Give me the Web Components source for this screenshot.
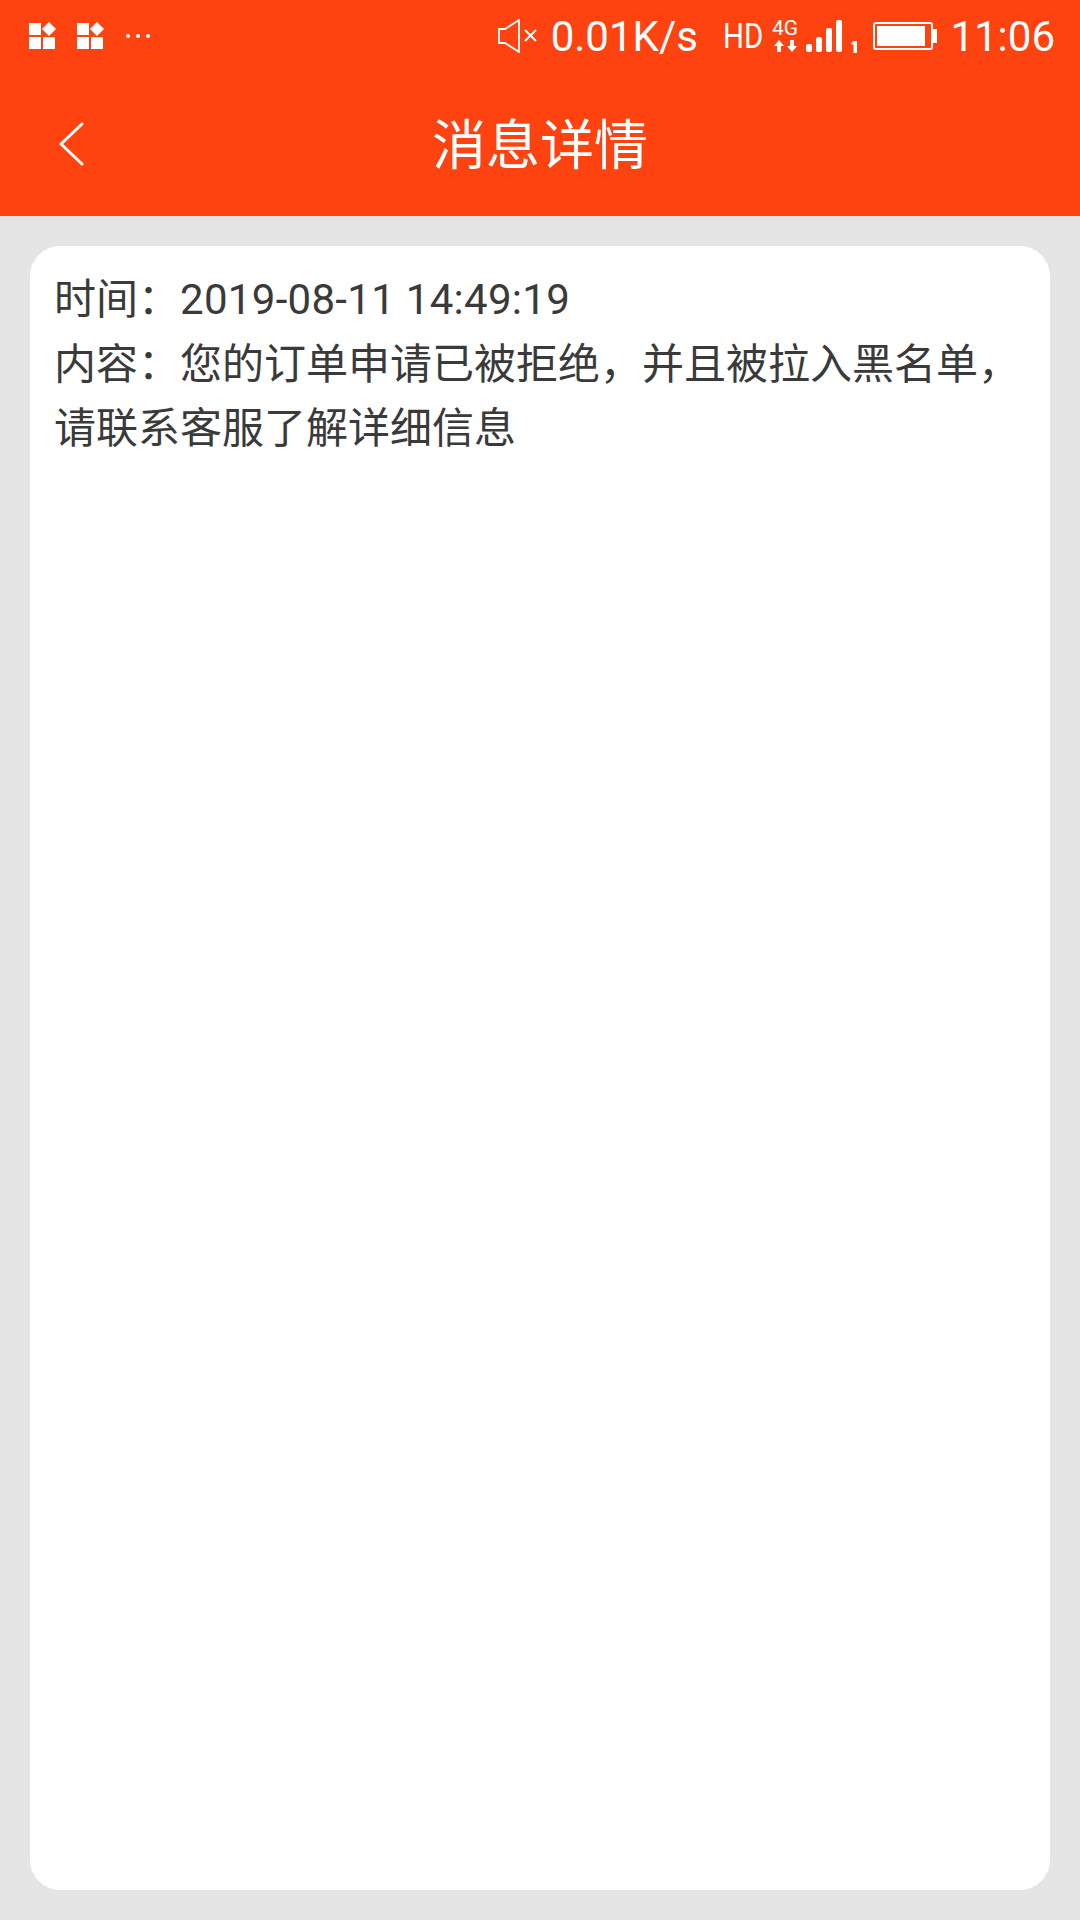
<!DOCTYPE html>
<html lang="zh-CN">
<head>
<meta charset="utf-8">
<title>消息详情</title>
<style>
  html, body { margin: 0; padding: 0; height: 100%; }
  body {
    display: flex;
    flex-direction: column;
    width: 1080px;
    height: 1920px;
    background: #e5e5e5;
    font-family: Roboto, "Noto Sans CJK SC", sans-serif;
  }
  .date { letter-spacing: .3px; }
</style>
</head>
<body>
<app-header>
  <status-bar></status-bar>
  <nav-bar>消息详情</nav-bar>
</app-header>
<message-card>
  <span slot="time">时间：<span class="date">2019-08-11 14:49:19</span></span>
  <span slot="content">内容：您的订单申请已被拒绝，并且被拉入黑名单，请联系客服了解详细信息</span>
</message-card>

<script>
class AppHeader extends HTMLElement {
  constructor() {
    super();
    this.attachShadow({ mode: 'open' });
    this.shadowRoot.innerHTML = `
      <style>
        :host {
          display: block;
          flex: none;
          background: #ff4310;
          color: #fff;
        }
      </style>
      <slot></slot>
    `;
  }
}

class StatusBar extends HTMLElement {
  constructor() {
    super();
    this.attachShadow({ mode: 'open' });
    this.shadowRoot.innerHTML = `
      <style>
        :host {
          display: flex;
          align-items: flex-start;
          justify-content: space-between;
          height: 72px;
        }
        svg { display: block; fill: #fff; flex: none; }
        .left { display: flex; padding: 22px 0 0 28px; }
        .right { display: flex; padding: 1px 25px 0 0; align-items: flex-start; }
        .app { margin-right: 20px; }
        .speed, .time {
          font: 400 42px/72px Roboto, sans-serif;
          white-space: nowrap;
          height: 71px;
        }
        .speed { margin: 0 25px 0 13px; }
        .time { margin-left: 13.500px; }
        .hd {
          font: 400 35px/72px Roboto, sans-serif;
          width: 40px;
          height: 71px;
          transform: scaleX(.84);
          transform-origin: left center;
          white-space: nowrap;
        }
        .net { margin: 19px 0 0 9px; width: 25px; height: 33px; }
        .net b {
          display: block;
          font: 400 21px/17px Roboto, sans-serif;
          height: 20px;
          white-space: nowrap;
        }
        .signal { margin: 19px 0 0 9px; }
        .speaker { margin: 18px 0 0 0; }
        .battery { margin: 21px 0 0 15px; }
      </style>
      <div class="left">
        <svg class="app" width="28" height="28" viewBox="0 0 28 28">
          <path d="M1 1h12v12H1zM1 15h12v12H1zM15 15h12v12H15zM21 0l7 7-7 7-7-7z"/>
        </svg>
        <svg class="app" width="28" height="28" viewBox="0 0 28 28">
          <path d="M1 1h12v12H1zM1 15h12v12H1zM15 15h12v12H15zM21 0l7 7-7 7-7-7z"/>
        </svg>
        <svg width="26" height="28" viewBox="0 0 26 28">
          <circle cx="4" cy="14" r="2"/><circle cx="14" cy="14" r="2"/><circle cx="24" cy="14" r="2"/>
        </svg>
      </div>
      <div class="right">
        <svg class="speaker" width="40" height="34" viewBox="0 0 40 34">
          <path d="M1 10h6L21 1v32L7 24H1z" style="fill:none;stroke:#fff;stroke-width:1.800"/>
          <path d="M27 11l11 11M38 11L27 22" style="fill:none;stroke:#fff;stroke-width:2"/>
        </svg>
        <div class="speed">0.01K/s</div>
        <div class="hd">HD</div>
        <div class="net">
          <b>4G</b>
          <svg width="25" height="12" viewBox="0 0 25 12">
            <path d="M7 0l5 6H9v6H5V6H2zM20 12l5-6h-3V0h-4v6h-3z"/>
          </svg>
        </div>
        <svg class="signal" width="52" height="33" viewBox="0 0 52 33">
          <rect x="0" y="24" width="6" height="8" rx="2"/>
          <rect x="10" y="17" width="6" height="15" rx="2"/>
          <rect x="20" y="8" width="6" height="24" rx="2"/>
          <rect x="30" y="0" width="6" height="32" rx="2"/>
          <path d="M47.500 21h3.500v12h-3.500v-8.500h-2v-2z"/>
        </svg>
        <svg class="battery" width="64" height="28" viewBox="0 0 64 28">
          <rect x="1" y="1" width="58" height="26" rx="2" style="fill:none;stroke:#fff;stroke-width:2"/>
          <rect x="4" y="4" width="48" height="20"/>
          <rect x="60" y="7" width="4" height="14"/>
        </svg>
        <div class="time">11:06</div>
      </div>
    `;
  }
}

class NavBar extends HTMLElement {
  constructor() {
    super();
    this.attachShadow({ mode: 'open' });
    this.shadowRoot.innerHTML = `
      <style>
        :host {
          display: grid;
          grid-template-columns: 1fr auto 1fr;
          align-items: center;
          height: 144px;
          font: 400 54px/1 "Noto Sans CJK SC", sans-serif;
        }
        button {
          justify-self: start;
          margin-left: 58px;
          padding: 0;
          border: 0;
          background: none;
          display: block;
        }
        svg { display: block; }
        .title { padding-bottom: 4px; }
      </style>
      <button aria-label="返回">
        <svg width="26" height="44" viewBox="0 0 26 44">
          <path d="M24 2L3 22l21 20" fill="none" stroke="#fff" stroke-width="3" stroke-linecap="round" stroke-linejoin="round"/>
        </svg>
      </button>
      <div class="title"><slot></slot></div>
      <span></span>
    `;
  }
}

class MessageCard extends HTMLElement {
  constructor() {
    super();
    this.attachShadow({ mode: 'open' });
    this.shadowRoot.innerHTML = `
      <style>
        :host {
          display: block;
          flex: 1;
          margin: 30px;
          padding: 22px 26px 18px 24px;
          background: #fff;
          border-radius: 30px;
          color: #3a3a3a;
          font: 400 42px/64.500px Roboto, "Noto Sans CJK SC", sans-serif;
        }
      </style>
      <div><slot name="time"></slot></div>
      <div><slot name="content"></slot></div>
    `;
  }
}

customElements.define('app-header', AppHeader);
customElements.define('status-bar', StatusBar);
customElements.define('nav-bar', NavBar);
customElements.define('message-card', MessageCard);
</script>
</body>
</html>
